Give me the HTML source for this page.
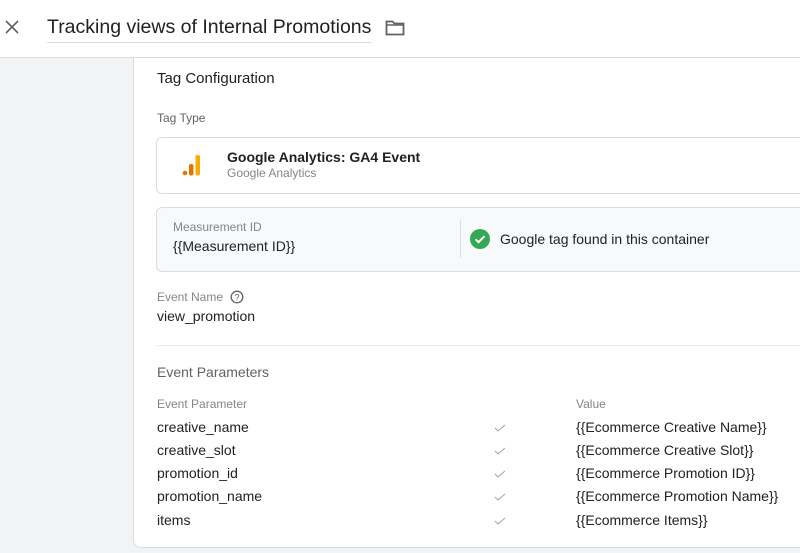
<!DOCTYPE html>
<html><head><style>
body{margin:0;width:800px;height:553px;overflow:hidden;background:#f1f3f4;font-family:"Liberation Sans",sans-serif;color:#202124;position:relative}
.hdr{position:absolute;left:0;top:0;width:800px;height:57px;background:#fff;border-bottom:1px solid #dadce0}
.a{position:absolute;white-space:nowrap}
.card{position:absolute;left:133px;top:58px;width:690px;height:489px;background:#fff;border:1px solid #dadce0;border-top:none;border-radius:0 0 8px 8px}
.lbl{font-size:12px;color:#5f6368}
.t14{font-size:14px;color:#202124}
.chk{position:absolute;left:494px;width:12px;height:8px}
</style></head><body>
<div class="hdr">
<svg class="a" style="left:5px;top:20px" width="14" height="14" viewBox="0 0 14 14"><path d="M1 1L13 13M13 1L1 13" stroke="#5f6368" stroke-width="1.6"/></svg>
<div class="a" style="left:47px;top:16px;font-size:19.5px;color:#202124">Tracking views of Internal Promotions</div>
<div class="a" style="left:47px;top:42px;width:325px;height:1px;background:#dadce0"></div>
<svg class="a" style="left:385px;top:19px" width="20" height="17" viewBox="0 0 20 17"><path d="M1.5 2.5h6l2 2h9v11h-17z" fill="none" stroke="#5f6368" stroke-width="1.8"/><path d="M1.5 6h17" stroke="#5f6368" stroke-width="1.5"/></svg>
</div>
<div class="card"></div>
<div class="a" style="left:157px;top:70px;font-size:15px">Tag Configuration</div>
<div class="a lbl" style="left:157px;top:111px">Tag Type</div>
<div class="a" style="left:156px;top:137px;width:660px;height:55px;border:1px solid #dadce0;border-radius:6px;background:#fff"></div>
<svg class="a" style="left:182px;top:154px" width="20" height="22" viewBox="0 0 20 22"><circle cx="3" cy="19" r="2.3" fill="#e37400"/><rect x="7" y="10" width="4.5" height="11.5" rx="2" fill="#e37400"/><rect x="13.5" y="1" width="4.5" height="20.5" rx="2" fill="#f9ab00"/></svg>
<div class="a" style="left:227px;top:149px;font-size:14px;font-weight:bold;color:#202124">Google Analytics: GA4 Event</div>
<div class="a lbl" style="left:227px;top:166px;color:#80868b">Google Analytics</div>
<div class="a" style="left:156px;top:207px;width:660px;height:63px;border:1px solid #dadce0;border-radius:6px;background:#f8f9fa"></div>
<div class="a lbl" style="left:173px;top:220px;color:#80868b">Measurement ID</div>
<div class="a t14" style="left:173px;top:238px">{{Measurement ID}}</div>
<div class="a" style="left:460px;top:220px;width:1px;height:38px;background:#dadce0"></div>
<svg class="a" style="left:470px;top:229px" width="20" height="20" viewBox="0 0 20 20"><circle cx="10" cy="10" r="10" fill="#34a853"/><path d="M5.5 10.2l3 3 6-6" fill="none" stroke="#fff" stroke-width="2"/></svg>
<div class="a t14" style="left:500px;top:231px;font-size:14px">Google tag found in this container</div>
<div class="a lbl" style="left:157px;top:290px;color:#80868b">Event Name</div>
<svg class="a" style="left:230px;top:290px" width="14" height="14" viewBox="0 0 14 14"><circle cx="7" cy="7" r="5.8" fill="none" stroke="#5f6368" stroke-width="1.3"/><text x="7" y="10.3" font-size="9" text-anchor="middle" fill="#5f6368" font-family="Liberation Sans">?</text></svg>
<div class="a t14" style="left:157px;top:308px">view_promotion</div>
<div class="a" style="left:157px;top:345px;width:660px;height:1px;background:#e8eaed"></div>
<div class="a" style="left:157px;top:364px;font-size:14px;color:#5f6368">Event Parameters</div>
<div class="a lbl" style="left:157px;top:397px;color:#80868b">Event Parameter</div>
<div class="a lbl" style="left:576px;top:397px;color:#80868b">Value</div>
<div class="a t14" style="left:157px;top:419px">creative_name</div>
<div class="a t14" style="left:157px;top:442px">creative_slot</div>
<div class="a t14" style="left:157px;top:465px">promotion_id</div>
<div class="a t14" style="left:157px;top:488px">promotion_name</div>
<div class="a t14" style="left:157px;top:512px">items</div>
<div class="a t14" style="left:576px;top:419px">{{Ecommerce Creative Name}}</div>
<div class="a t14" style="left:576px;top:442px">{{Ecommerce Creative Slot}}</div>
<div class="a t14" style="left:576px;top:465px">{{Ecommerce Promotion ID}}</div>
<div class="a t14" style="left:576px;top:488px">{{Ecommerce Promotion Name}}</div>
<div class="a t14" style="left:576px;top:512px">{{Ecommerce Items}}</div>
<svg class="chk" style="top:424px" viewBox="0 0 12 8"><path d="M1 4l3 3 7-6" fill="none" stroke="#9aa0a6" stroke-width="1"/></svg>
<svg class="chk" style="top:447px" viewBox="0 0 12 8"><path d="M1 4l3 3 7-6" fill="none" stroke="#9aa0a6" stroke-width="1"/></svg>
<svg class="chk" style="top:470px" viewBox="0 0 12 8"><path d="M1 4l3 3 7-6" fill="none" stroke="#9aa0a6" stroke-width="1"/></svg>
<svg class="chk" style="top:493px" viewBox="0 0 12 8"><path d="M1 4l3 3 7-6" fill="none" stroke="#9aa0a6" stroke-width="1"/></svg>
<svg class="chk" style="top:517px" viewBox="0 0 12 8"><path d="M1 4l3 3 7-6" fill="none" stroke="#9aa0a6" stroke-width="1"/></svg>
</body></html>
